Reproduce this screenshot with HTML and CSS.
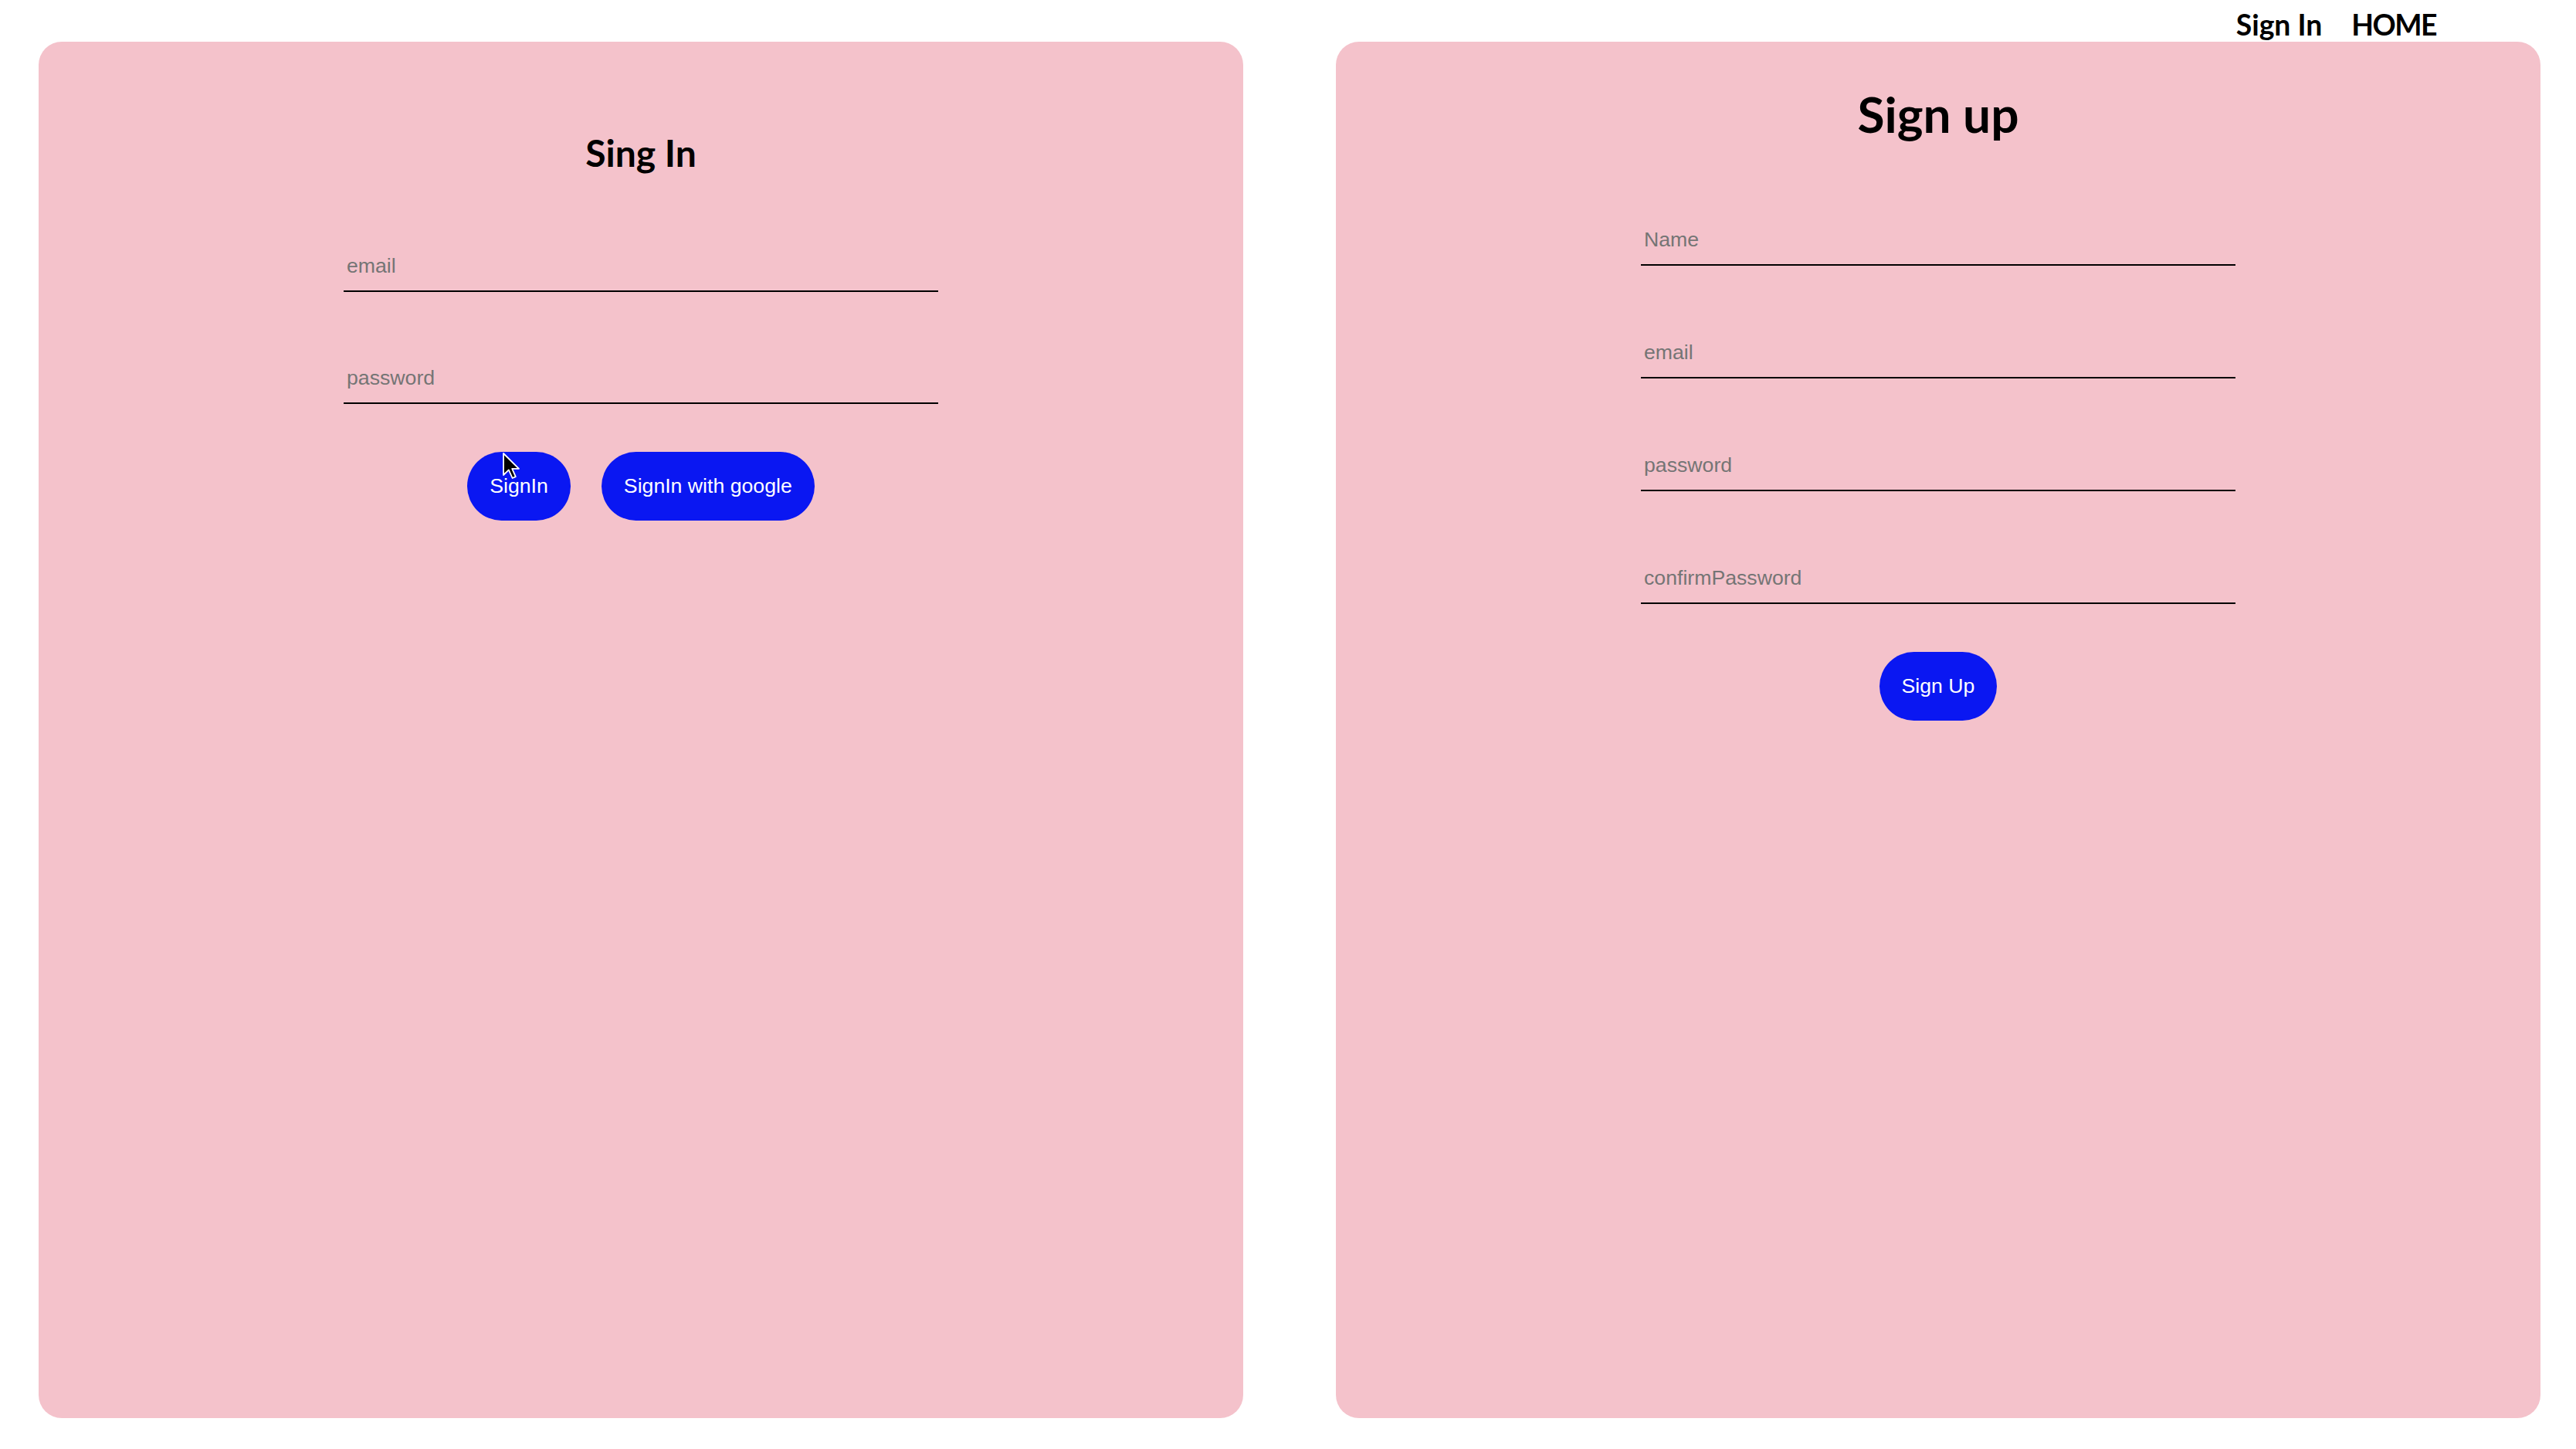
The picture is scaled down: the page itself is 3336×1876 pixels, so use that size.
FILE: index.html
```html
<!DOCTYPE html>
<html lang="en">
<head>
<meta charset="utf-8">
<title>Sign In / Sign up</title>
<link rel="stylesheet" href="styles.css">
</head>
<body>
<header class="topnav">
  <a class="navlink" href="#">Sign In</a>
  <a class="navlink navlink-home" href="#">HOME</a>
</header>
<main class="panels">
  <section class="card card-signin">
    <h2 class="card-title title-sm">Sing In</h2>
    <form class="form">
      <div class="fields">
        <input class="field" type="email" placeholder="email">
        <input class="field" type="password" placeholder="password">
      </div>
      <div class="actions">
        <button class="btn" type="button">SignIn</button>
        <button class="btn" type="button">SignIn with google</button>
      </div>
    </form>
    <svg class="cursor" width="24" height="36" viewBox="0 0 12 18" aria-hidden="true">
      <path d="M1 1 L1 15 L4.4 11.7 L6.8 17 L8.9 16.1 L6.6 10.9 L11 10.9 Z" fill="#000" stroke="#fff" stroke-width="0.9" stroke-linejoin="round"/>
    </svg>
  </section>
  <section class="card card-signup">
    <h1 class="card-title title-lg">Sign up</h1>
    <form class="form">
      <div class="fields fields-wide">
        <input class="field" type="text" placeholder="Name">
        <input class="field" type="email" placeholder="email">
        <input class="field" type="password" placeholder="password">
        <input class="field" type="password" placeholder="confirmPassword">
      </div>
      <div class="actions">
        <button class="btn" type="button">Sign Up</button>
      </div>
    </form>
  </section>
</main>
</body>
</html>
```
FILE: styles.css
```css
html, body {
  margin: 0;
  padding: 0;
  background: #ffffff;
}

body {
  width: 3336px;
  height: 1876px;
  overflow: hidden;
  font-family: Lato, "Noto Sans", sans-serif;
  color: #000;
}

.topnav {
  display: flex;
  justify-content: flex-end;
  gap: 38px;
  height: 54px;
  box-sizing: border-box;
  padding: 10px 181px 0 0;
}

.navlink {
  font-size: 37.33px;
  font-weight: 700;
  line-height: 1.2;
  color: #000;
  text-decoration: none;
}

.navlink-home {
  letter-spacing: -1.5px;
}

.panels {
  display: flex;
  gap: 120px;
  padding-left: 50px;
}

.card {
  position: relative;
  width: 1560px;
  height: 1782px;
  box-sizing: border-box;
  background: #f4c2cb;
  border-radius: 30px;
  display: flex;
  flex-direction: column;
  align-items: center;
}

.card-signin {
  padding-top: 115px;
}

.card-signup {
  padding-top: 56px;
}

.card-title {
  margin: 0;
  font-weight: 700;
  line-height: 1.2;
}

.title-sm {
  font-size: 48px;
}

.title-lg {
  font-size: 64px;
}

.form {
  display: flex;
  flex-direction: column;
  align-items: center;
}

.card-signin .form {
  margin-top: 82px;
}

.card-signup .form {
  margin-top: 88px;
}

.fields {
  display: flex;
  flex-direction: column;
  gap: 76px;
}

.fields-wide {
  gap: 77px;
}

.field {
  width: 770px;
  height: 69px;
  box-sizing: border-box;
  padding: 20px 4px 16px;
  margin: 0;
  border: 0;
  border-bottom: 2px solid #000;
  background: transparent;
  font-family: "Liberation Sans", Arial, sans-serif;
  font-size: 26.67px;
  color: #000;
  outline: none;
}

.field::placeholder {
  color: #757575;
}

.actions {
  display: flex;
  gap: 40px;
  margin-top: 62px;
}

.btn {
  height: 89px;
  padding: 0 29px;
  border: 0;
  border-radius: 45px;
  background: #0a17f2;
  color: #fff;
  font-family: "Liberation Sans", Arial, sans-serif;
  font-size: 26.67px;
  line-height: 29px;
  cursor: pointer;
}

.cursor {
  position: absolute;
  left: 600px;
  top: 531px;
}
```
